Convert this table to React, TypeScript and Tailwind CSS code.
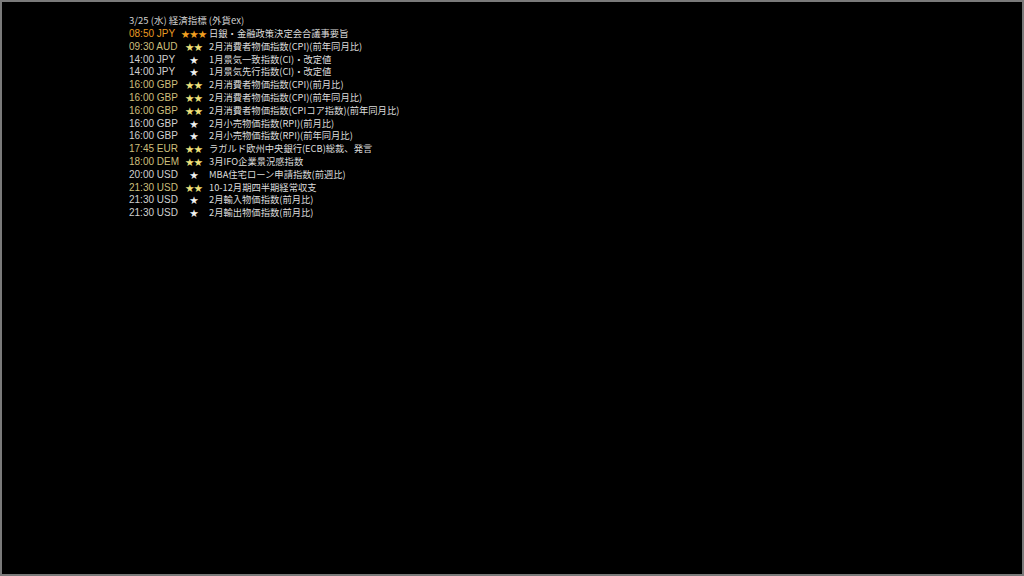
import React from "react";

type Row = {
  time: string;
  stars: 1 | 2 | 3;
  title: string;
};

const rows: Row[] = [
  { time: "08:50 JPY", stars: 3, title: "日銀・金融政策決定会合議事要旨" },
  { time: "09:30 AUD", stars: 2, title: "2月消費者物価指数(CPI)(前年同月比)" },
  { time: "14:00 JPY", stars: 1, title: "1月景気一致指数(CI)・改定値" },
  { time: "14:00 JPY", stars: 1, title: "1月景気先行指数(CI)・改定値" },
  { time: "16:00 GBP", stars: 2, title: "2月消費者物価指数(CPI)(前月比)" },
  { time: "16:00 GBP", stars: 2, title: "2月消費者物価指数(CPI)(前年同月比)" },
  { time: "16:00 GBP", stars: 2, title: "2月消費者物価指数(CPIコア指数)(前年同月比)" },
  { time: "16:00 GBP", stars: 1, title: "2月小売物価指数(RPI)(前月比)" },
  { time: "16:00 GBP", stars: 1, title: "2月小売物価指数(RPI)(前年同月比)" },
  { time: "17:45 EUR", stars: 2, title: "ラガルド欧州中央銀行(ECB)総裁、発言" },
  { time: "18:00 DEM", stars: 2, title: "3月IFO企業景況感指数" },
  { time: "20:00 USD", stars: 1, title: "MBA住宅ローン申請指数(前週比)" },
  { time: "21:30 USD", stars: 2, title: "10-12月期四半期経常収支" },
  { time: "21:30 USD", stars: 1, title: "2月輸入物価指数(前月比)" },
  { time: "21:30 USD", stars: 1, title: "2月輸出物価指数(前月比)" },
];

// 重要度ごとの色
const timeColor = {
  1: "text-[#d0d0d0]",
  2: "text-[#cdbf7c]",
  3: "text-[#e89a22]",
};
const starColor = {
  1: "text-[#f0f0f0]",
  2: "text-[#efe07a]",
  3: "text-[#f2a020]",
};

export default function App() {
  return (
    <div className="w-[1024px] h-[576px] bg-black border-2 border-[#7a7a7a] overflow-hidden font-['Noto_Sans_CJK_JP',sans-serif]">
      <div className="pl-[127px] pt-[12px]">
        <div className="h-[13px] leading-[13px] text-[9.5px] text-[#cfcfcf] whitespace-nowrap">
          3/25 (水) 経済指標 (外貨ex)
        </div>
        {rows.map((r, i) => (
          <div key={i} className="flex h-[12.8px] items-baseline leading-[12.8px] whitespace-nowrap">
            <span
              className={`w-[50px] shrink-0 text-[10px] font-['Liberation_Sans',sans-serif] ${timeColor[r.stars]}`}
            >
              {r.time}
            </span>
            <span
              className={`w-[30px] shrink-0 text-center text-[8.5px] ${starColor[r.stars]}`}
            >
              {"★".repeat(r.stars)}
            </span>
            <span className="text-[9.3px] text-[#dcdcdc]">{r.title}</span>
          </div>
        ))}
      </div>
    </div>
  );
}
